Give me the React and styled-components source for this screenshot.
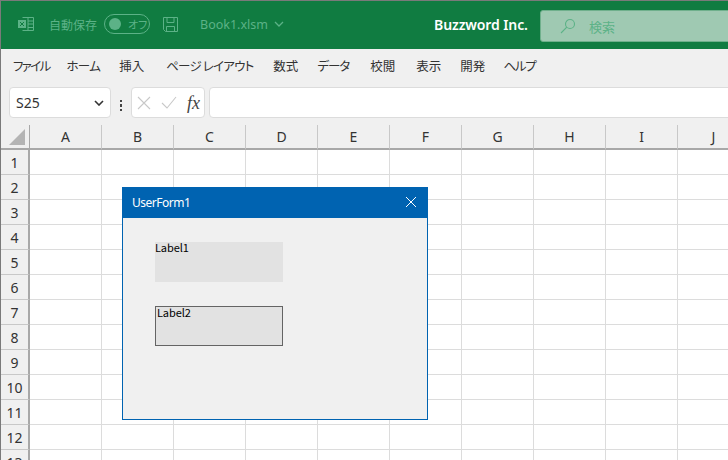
import React from "react";
import styled, { createGlobalStyle } from "styled-components";

const Global = createGlobalStyle`
  html, body { margin: 0; padding: 0; width: 728px; height: 460px; overflow: hidden; background: #fff; }
  body { font-family: "Noto Sans", "Noto Sans CJK JP", sans-serif; }
  * { box-sizing: border-box; }
`;

const Page = styled.div`
  position: relative; width: 728px; height: 460px; overflow: hidden;
  border-top: 1px solid #7a7a7a; border-left: 1px solid #7a7a7a;
  display: flex; flex-direction: column; background: #fff;
`;
const TitleBar = styled.div`
  height: 48px; flex: none; background: #107c41; display: flex; align-items: center; color: #5cb287;
  font-size: 12.5px; position: relative; padding-bottom: 2px;
`;
const Faded = styled.span`
  font-family: "Noto Sans CJK JP", sans-serif; font-size: ${p => p.$size || 12}px; margin-left: ${p => p.$ml || 0}px; white-space: nowrap;
  font-feature-settings: "palt";
`;
const Toggle = styled.div`
  width: 46px; height: 20px; border: 1px solid #5cb287; border-radius: 10px; margin-left: 7px;
  display: flex; align-items: center; padding-left: 4px; gap: 7px; flex: none;
`;
const Knob = styled.div`width: 12px; height: 12px; border-radius: 50%; background: #5cb287;`;
const FileName = styled.span`margin-left: 21px; font-size: 12.5px; white-space: nowrap;`;
const Company = styled.span`
  position: absolute; left: 433px; top: 14px; color: #fff; font-size: 14px; font-weight: 600; white-space: nowrap; letter-spacing: -0.1px;
`;
const Search = styled.div`
  position: absolute; left: 539px; top: 9px; width: 200px; height: 32px; background: #9fc9b2; border-radius: 3px;
  border: 1px solid #6fb08c; display: flex; align-items: center; padding-left: 19px; color: #5cb287; gap: 13px;
`;
const Tabs = styled.div`
  height: 31px; flex: none; background: #f0f0f0; display: flex; align-items: center; padding: 2px 0 0 12px; gap: 19px;
  font-family: "Noto Sans CJK JP", sans-serif; font-size: 12.5px; color: #333; font-feature-settings: "palt";
`;
const Tab = styled.span`
  white-space: nowrap; letter-spacing: ${p => p.$ls || 0}px; margin-left: ${p => p.$ml || 0}px;
`;
const FormulaRow = styled.div`
  height: 45px; flex: none; background: #f0f0f0; display: flex; align-items: flex-start; padding: 7px 0 0 8px;
`;
const FormulaBox = styled.div`
  height: 31px; background: #fff; border: 1px solid #dcdcdc; border-radius: 4px; display: flex; align-items: center; flex: none;
`;
const NameBox = styled(FormulaBox)`
  width: 102px; justify-content: space-between; padding: 0 6px; font-size: 14px; color: #333;
`;
const Dots = styled.div`
  width: 20px; flex: none; display: flex; flex-direction: column; gap: 2px; align-items: center; align-self: center; margin-top: -1px;
  span { width: 2.5px; height: 2.5px; background: #444; }
`;
const FuncBox = styled(FormulaBox)`
  width: 74px; padding: 0 4px 0 5px; justify-content: space-between; margin-right: 4px;
`;
const Fx = styled.span`
  font-family: "Liberation Serif", serif; font-style: italic; font-size: 18px; color: #444; line-height: 1;
`;
const InputBox = styled(FormulaBox)`width: 560px; border-radius: 4px 0 0 4px;`;
const Sheet = styled.div`
  flex: 1; display: grid; grid-template-columns: 29px repeat(10, 72px); grid-auto-rows: 25px; background: #fff;
`;
const Corner = styled.div`
  background: #f0f0f0; border-right: 1px solid #a8a8a8; border-bottom: 2px solid #a8a8a8; position: relative;
  &::after {
    content: ""; position: absolute; right: 4px; bottom: 3px; width: 0; height: 0;
    border-style: solid; border-width: 0 0 16px 16px; border-color: transparent transparent #b4b4b4 transparent;
  }
`;
const ColHead = styled.div`
  background: #f0f0f0; border-right: 1px solid #c8c8c8; border-bottom: 2px solid #a8a8a8;
  display: flex; align-items: center; justify-content: center; font-size: 14px; color: #333; padding-bottom: 1px;
`;
const RowHead = styled.div`
  background: #f0f0f0; border-right: 2px solid #a8a8a8; border-bottom: 1px solid #c8c8c8;
  display: flex; align-items: center; justify-content: center; font-size: 14px; color: #333; 
`;
const Cell = styled.div`
  border-right: 1px solid #dcdcdc; border-bottom: 1px solid #dcdcdc;
`;
const Dialog = styled.div`
  position: absolute; left: 121px; top: 186px; width: 306px; height: 233px; background: #f0f0f0;
  border: 1px solid #0063b1; display: flex; flex-direction: column;
`;
const DialogTitle = styled.div`
  height: 30px; background: #0063b1; color: #fff; font-size: 12px; letter-spacing: -0.5px; display: flex; align-items: center;
  justify-content: space-between; padding: 0 10px 2px 9px; flex: none;
`;
const DialogBody = styled.div`
  padding: 24px 0 0 32px; display: flex; flex-direction: column; gap: 24px;
`;
const Label = styled.div`
  width: 128px; height: 40px; background: #e2e2e2; color: #000;
  border: ${p => (p.$bordered ? "1px solid #646464" : "none")};
  font-family: "Noto Sans CJK JP", sans-serif; font-size: 11px; line-height: 10px; letter-spacing: -0.1px; padding-left: ${p => (p.$bordered ? "1px" : "0")};
`;

const cols = ["A", "B", "C", "D", "E", "F", "G", "H", "I", "J"];
const rows = [1, 2, 3, 4, 5, 6, 7, 8, 9, 10, 11, 12, 13];
const tabs = [
  { text: "ファイル", ls: -1.7, ml: 0 },
  { text: "ホーム", ls: -0.7, ml: -2 },
  { text: "挿入", ls: 0, ml: 0 },
  { text: "ページ レイアウト", ls: -0.8, ml: 3 },
  { text: "数式", ls: 0, ml: 1 },
  { text: "データ", ls: -1, ml: 0 },
  { text: "校閲", ls: 0, ml: 2 },
  { text: "表示", ls: 0, ml: 2 },
  { text: "開発", ls: 0, ml: 0 },
  { text: "ヘルプ", ls: -1.3, ml: -1 },
];

export default function App() {
  return (
    <Page>
      <Global />
      <TitleBar>
        <svg width="18" height="18" viewBox="0 0 18 18" style={{ marginLeft: 16 }} fill="none" stroke="#5cb287" strokeWidth="1">
          <path d="M5.5 2.5h11v13h-11M11 2.5v13M11 6h5.5M11 9h5.5M11 12.5h5.5" />
          <rect x="1" y="5" width="8" height="8" fill="#5cb287" stroke="none" />
          <path d="M3 7l4 4M7 7l-4 4" stroke="#107c41" />
        </svg>
        <Faded $ml={14}>自動保存</Faded>
        <Toggle><Knob /><Faded $size={11}>オフ</Faded></Toggle>
        <svg width="17" height="17" viewBox="0 0 17 17" style={{ marginLeft: 12 }} fill="none" stroke="#5cb287" strokeWidth="1">
          <path d="M1.5 1.5h14v14h-12l-2-2zM5 1.5v5h7v-5M4.5 15.5v-5h8v5" />
        </svg>
        <FileName>Book1.xlsm</FileName>
        <svg width="10" height="6" viewBox="0 0 10 6" style={{ marginLeft: 6 }} fill="none" stroke="#5cb287" strokeWidth="1.3">
          <path d="M1 1l4 4 4-4" />
        </svg>
        <Company>Buzzword Inc.</Company>
        <Search>
          <svg width="16" height="16" viewBox="0 0 16 16" fill="none" stroke="#5cb287" strokeWidth="1.1">
            <circle cx="10" cy="6" r="4.5" />
            <path d="M6.8 9.2L1 15" />
          </svg>
          <Faded $size={13}>検索</Faded>
        </Search>
      </TitleBar>
      <Tabs>
        {tabs.map(t => <Tab key={t.text} $ls={t.ls} $ml={t.ml}>{t.text}</Tab>)}
      </Tabs>
      <FormulaRow>
        <NameBox>
          <span>S25</span>
          <svg width="10" height="6" viewBox="0 0 10 6" fill="none" stroke="#333" strokeWidth="1.6"><path d="M1 1l4 4 4-4" /></svg>
        </NameBox>
        <Dots><span /><span /><span /></Dots>
        <FuncBox>
          <svg width="14" height="14" viewBox="0 0 14 14" fill="none" stroke="#c8c8c8" strokeWidth="1.1"><path d="M1 1l12 12M13 1L1 13" /></svg>
          <svg width="16" height="13" viewBox="0 0 16 13" fill="none" stroke="#c8c8c8" strokeWidth="1.1"><path d="M1 7l5 5L15 1" /></svg>
          <Fx>fx</Fx>
        </FuncBox>
        <InputBox />
      </FormulaRow>
      <Sheet>
        <Corner />
        {cols.map(c => <ColHead key={c}>{c}</ColHead>)}
        {rows.map(r => (
          <React.Fragment key={r}>
            <RowHead>{r}</RowHead>
            {cols.map(c => <Cell key={c} />)}
          </React.Fragment>
        ))}
      </Sheet>
      <Dialog>
        <DialogTitle>
          <span>UserForm1</span>
          <svg width="12" height="12" viewBox="0 0 12 12" fill="none" stroke="#fff" strokeWidth="1"><path d="M1 1l10 10M11 1L1 11" /></svg>
        </DialogTitle>
        <DialogBody>
          <Label>Label1</Label>
          <Label $bordered>Label2</Label>
        </DialogBody>
      </Dialog>
    </Page>
  );
}
